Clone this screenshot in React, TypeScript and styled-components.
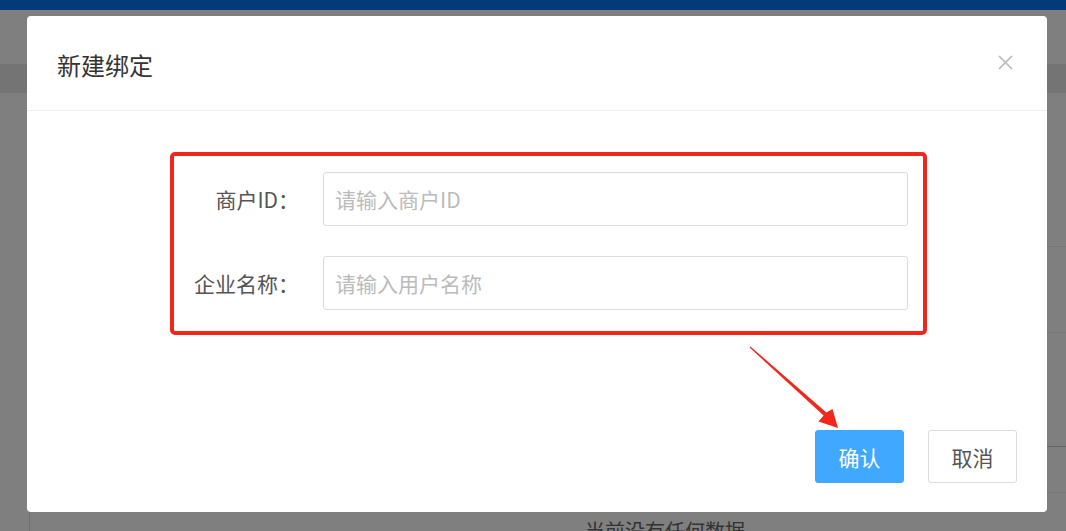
import React from 'react';
import styled, { createGlobalStyle } from 'styled-components';

const GlobalStyle = createGlobalStyle`
  html, body {
    margin: 0;
    padding: 0;
  }
  body {
    font-family: "Noto Sans CJK SC", "Noto Sans", sans-serif;
  }
`;

const Page = styled.div`
  position: relative;
  width: 100%;
  height: 100vh;
  overflow: hidden;
  background: #fff;
`;

/* page behind the dialog */
const TopBar = styled.div`
  height: 10px;
  background: #0676f4;
`;

const PageHeader = styled.div`
  height: 54px;
`;

const TabBand = styled.div`
  height: 29px;
  background: #e8e8e8;
`;

const Table = styled.div`
  margin-left: 29px;
  border-left: 1px solid #dedede;
`;

const TableRow = styled.div<{ $height: number; $strong?: boolean }>`
  height: ${p => p.$height}px;
  box-sizing: border-box;
  border-bottom: 1px solid ${p => (p.$strong ? '#c8c8c8' : '#ececec')};
`;

const EmptyText = styled.div`
  padding: 23px 0 0 555px;
  font-size: 20px;
  color: #666;
`;

/* dialog */
const Overlay = styled.div`
  position: absolute;
  inset: 0;
  background: rgba(0, 0, 0, 0.5);
  padding: 16px 0 0 27px;
  box-sizing: border-box;
`;

const Dialog = styled.div`
  width: 1020px;
  height: 496px;
  background: #fff;
  border-radius: 4px;
  display: flex;
  flex-direction: column;
`;

const DialogHeader = styled.div`
  height: 95px;
  box-sizing: border-box;
  border-bottom: 1px solid #eee;
  display: flex;
  align-items: center;
  justify-content: space-between;
  padding: 3px 34px 0 30px;
`;

const Title = styled.div`
  font-size: 24px;
  color: #333;
`;

const CloseButton = styled.button`
  border: none;
  background: none;
  padding: 0;
  width: 15px;
  height: 15px;
  display: flex;
  cursor: pointer;
  margin-top: -4px;
`;

const FormBox = styled.div`
  margin: 41px 0 0 143px;
  width: 757px;
  box-sizing: border-box;
  border: 4px solid #f2271c;
  border-radius: 5px;
  padding: 16px 15px 21px 0;
  display: flex;
  flex-direction: column;
  gap: 30px;
`;

const FormRow = styled.div`
  display: flex;
  align-items: center;
`;

const Label = styled.label`
  width: 125px;
  margin-right: 24px;
  text-align: right;
  font-size: 21px;
  color: #555;
  white-space: nowrap;
`;

const Input = styled.input`
  flex: 1;
  height: 54px;
  box-sizing: border-box;
  border: 1px solid #dcdcdc;
  border-radius: 3px;
  padding: 0 11px;
  font-family: inherit;
  font-size: 21px;
  color: #333;
  outline: none;

  &::placeholder {
    color: #bbb;
  }
`;

const Footer = styled.div`
  margin-top: auto;
  display: flex;
  justify-content: flex-end;
  gap: 24px;
  padding: 0 30px 29px 0;
`;

const Button = styled.button<{ $primary?: boolean }>`
  width: 89px;
  height: 53px;
  box-sizing: border-box;
  border-radius: 3px;
  font-family: inherit;
  font-size: 21px;
  cursor: pointer;
  border: 1px solid ${p => (p.$primary ? '#40a9ff' : '#dcdcdc')};
  background: ${p => (p.$primary ? '#40a9ff' : '#fff')};
  color: ${p => (p.$primary ? '#fff' : '#555')};
`;

const Annotation = styled.svg`
  position: absolute;
  inset: 0;
  width: 100%;
  height: 100%;
  pointer-events: none;
`;

const CloseIcon = () => (
  <svg width="15" height="15" viewBox="0 0 15 15">
    <path d="M1 1 L14 14 M14 1 L1 14" stroke="#b8b8b8" strokeWidth="1.7" fill="none" />
  </svg>
);

export default function App() {
  return (
    <>
      <GlobalStyle />
      <Page>
        <TopBar />
        <PageHeader />
        <TabBand />
        <Table>
          <TableRow $height={154} />
          <TableRow $height={86} />
          <TableRow $height={114} $strong />
          <TableRow $height={46} />
          <EmptyText>当前没有任何数据</EmptyText>
        </Table>

        <Overlay>
          <Dialog>
            <DialogHeader>
              <Title>新建绑定</Title>
              <CloseButton aria-label="关闭">
                <CloseIcon />
              </CloseButton>
            </DialogHeader>

            <FormBox>
              <FormRow>
                <Label>商户ID：</Label>
                <Input placeholder="请输入商户ID" />
              </FormRow>
              <FormRow>
                <Label>企业名称：</Label>
                <Input placeholder="请输入用户名称" />
              </FormRow>
            </FormBox>

            <Footer>
              <Button $primary>确认</Button>
              <Button>取消</Button>
            </Footer>
          </Dialog>
        </Overlay>

        <Annotation viewBox="0 0 1066 531">
          <polygon
            points="749.6,347.5 823.6,415.6 818.5,421.5 838,428 832.5,409 826.4,412.4 750.4,346.5"
            fill="#f2271c"
          />
        </Annotation>
      </Page>
    </>
  );
}
